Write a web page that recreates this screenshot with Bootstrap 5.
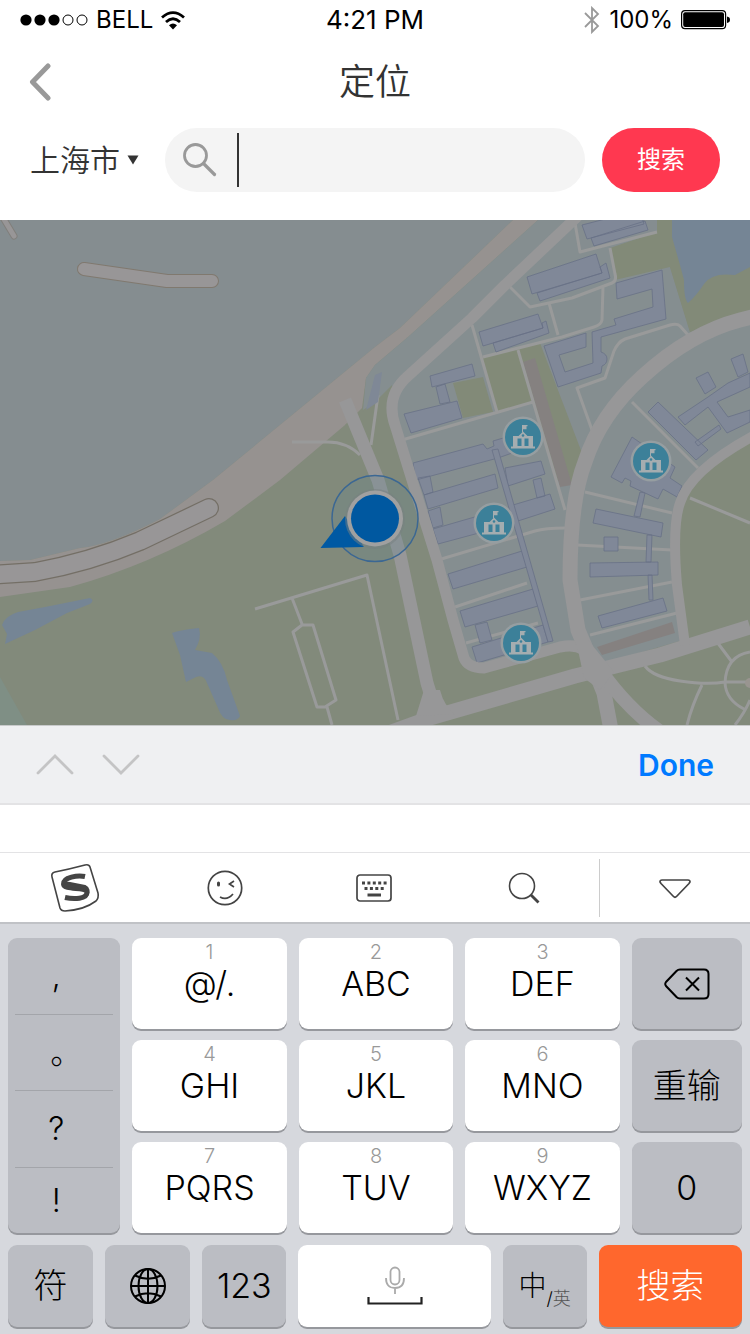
<!DOCTYPE html>
<html lang="zh-CN">
<head>
<meta charset="utf-8">
<meta name="viewport" content="width=device-width, initial-scale=1">
<title>定位</title>
<link rel="stylesheet" href="https://cdn.jsdelivr.net/npm/bootstrap@5.3.0/dist/css/bootstrap.min.css">
<style>
  body { font-family: Inter, "Noto Sans CJK SC", sans-serif; color: #333; background: #fff; }
  button { font-family: inherit; }
  .status { height: 40px; font-size: 24px; line-height: 40px; color: #000; font-weight: 400; }
  .status .clock { font-size: 26px; }
  .title-bar { height: 84px; }
  .title-bar h1 { font-size: 36px; line-height: 48px; font-weight: 350; }
  .search-row { gap: 17px; padding: 4px 30px 28px; }
  .city { width: 118px; }
  .city select { appearance: none; border: 0; background: none; padding: 0; width: 97px; font-size: 30px; line-height: 44px; font-weight: 350; color: #333; }
  .search-box { height: 64px; min-width: 0; background: #f4f4f4; padding: 0 24px 0 18px; }
  .search-box input { border: 0; background: none; outline: 0; font-size: 28px; width: 0; min-width: 0; }
  .caret-bar { width: 2px; height: 54px; background: #333; margin-left: 20px; }
  .search-btn { width: 118px; height: 64px; background: #ff3850; color: #fff; font-size: 24px; line-height: 36px; }
  .map { flex: 1 1 0; min-height: 300px; width: 100%; }
  .accessory { height: 80px; background: #eff0f2; border-top: 1px solid #c8cacb; border-bottom: 2px solid #e3e3e5; padding: 0 36px; }
  .accessory .step-btn { padding: 0; border: 0; background: none; line-height: 0; }
  .done { border: 0; background: none; padding: 0; color: #007aff; font-size: 30px; line-height: 44px; font-weight: 600; }
  .candidates { height: 47px; }
  .tools { height: 72px; border-top: 1px solid #e3e3e5; border-bottom: 2px solid #c0c2c6; }
  .tools button { flex: 1 1 0; border: 0; background: none; padding: 0; height: 58px; }
  .tools button:last-child { border-left: 1px solid #ccc; }
  .keyboard { background: #d6d8dd; padding: 14px 8px 7px; }
  .keys { display: grid; grid-template-columns: 112fr 154fr 154fr 154fr 110fr; grid-auto-rows: 91px; gap: 11px 12px; }
  .bottom-keys { display: grid; grid-template-columns: 85fr 85fr 84fr 192fr 84fr 143fr; grid-auto-rows: 82px; gap: 12px; margin-top: 12px; }
  .key { border: 0; border-radius: 9px; background: #fff; color: #000; box-shadow: 0 2px 0 #96989d; padding: 0; font-size: 34px; line-height: 44px; font-weight: 300; min-width: 0; }
  .key svg { display: block; margin: 0 auto; }
  .key.alt { background: #bbbdc3; }
  .key.go { background: #ff672d; color: #fff; }
  .key .num { font-size: 20px; line-height: 20px; color: #999; padding-top: 4px; }
  .key-letters { display: flex; flex-direction: column; align-items: center; }
  .punct { grid-row: span 3; display: grid; grid-template-rows: 76fr 76fr 77fr 66fr; padding: 0 7px; }
  .punct button { min-height: 0; border: 0; background: none; color: #000; font-size: 32px; font-weight: 300; line-height: 44px; padding: 0 16px 0 0; }
  .punct button + button { border-top: 1px solid #a3a5aa; }
  .punct .stop { padding: 0 0 0 4px; }
  .lang-main { font-size: 28px; }
  .lang-sub { font-size: 18px; color: #555; padding-top: 26px; }
</style>
</head>
<body class="d-flex flex-column min-vh-100">

<header class="bg-white">
  <div class="status row g-0 px-3">
    <div class="col d-flex align-items-center">
      <svg class="ms-1 me-2" width="68" height="12" viewBox="0 0 68 12" aria-hidden="true"><g fill="#000"><circle cx="6" cy="6" r="5.6"/><circle cx="20" cy="6" r="5.6"/><circle cx="34" cy="6" r="5.6"/></g><g fill="none" stroke="#000"><circle cx="48" cy="6" r="5"/><circle cx="62" cy="6" r="5"/></g></svg>
      <span>BELL</span>
      <svg class="ms-2" width="24" height="19" viewBox="0 0 24 19" aria-label="Wi-Fi"><g fill="none" stroke="#000" stroke-width="2.8"><path d="M1 6.500Q12-3.200 23 6.500"/><path d="M5 11Q12 4.600 19 11"/></g><path d="M8 14.200Q12 11 16 14.200L12 18.500z"/></svg>
    </div>
    <div class="clock col-auto">4:21 PM</div>
    <div class="col d-flex align-items-center justify-content-end">
      <svg class="me-2" width="18" height="28" viewBox="0 0 18 28" aria-label="Bluetooth"><path d="M2 7l13 13-6 6V2l6 6L2 21" fill="none" stroke="#999" stroke-width="1.8"/></svg>
      <span>100%</span>
      <svg class="ms-2 me-1" width="49" height="20" viewBox="0 0 49 20" aria-label="电池"><rect x=".6" y=".6" width="44" height="18" rx="3.4" fill="none" stroke="#000" stroke-width="1.2"/><rect x="2.2" y="2.2" width="40.8" height="14.8" rx="2" fill="#000"/><path d="M46 6.500q3 .6 3 3.300t-3 3.300z"/></svg>
    </div>
  </div>
  <nav class="title-bar row g-0 align-items-center px-4">
    <div class="col"><a href="#" class="d-inline-block ms-1" aria-label="返回"><svg width="24" height="38" viewBox="0 0 24 38"><path d="M20 3L4.500 19 20 35" fill="none" stroke="#999" stroke-width="5" stroke-linecap="round" stroke-linejoin="round"/></svg></a></div>
    <h1 class="col-auto m-0">定位</h1>
    <div class="col"></div>
  </nav>
  <form class="search-row d-flex align-items-center" onsubmit="return false">
    <div class="city d-flex align-items-center flex-shrink-0 pe-2">
      <select aria-label="城市"><option>上海市</option></select>
      <svg class="flex-shrink-0" width="12" height="10" viewBox="0 0 12 10" aria-hidden="true"><path d="M.5.500h11L6 9.500z" fill="#333"/></svg>
    </div>
    <div class="search-box rounded-pill d-flex align-items-center flex-grow-1">
      <svg class="flex-shrink-0" width="34" height="34" viewBox="0 0 34 34" aria-hidden="true"><g fill="none" stroke="#999" stroke-width="2.800" stroke-linecap="round"><circle cx="12.500" cy="12.500" r="11"/><path d="M20.500 20.500L31.500 31.500" stroke-width="3.200"/></g></svg>
      <span class="caret-bar flex-shrink-0"></span>
      <input class="flex-grow-1" type="text" aria-label="搜索地点">
    </div>
    <button class="search-btn btn rounded-pill border-0 p-0 flex-shrink-0" type="submit">搜索</button>
  </form>
</header>

<svg class="map d-block" viewBox="0 220 750 505" preserveAspectRatio="xMidYMid slice" role="img" aria-label="地图">
  <defs>
    <g id="pin">
      <circle r="20.500" fill="#969ea1"/><circle r="18" fill="#3c8099"/>
      <g fill="#a5adb0"><path d="M-12 9.500h24v2h-24zM-10-1h5.500L0-5.500 4.500-1H10V10H-10z"/><path d="M-1-12h5.500v1.200h-1v3h-3.500v3H-1z"/></g>
      <path d="M-5.500 1.500h4V9h-4zM1.500 1.500h4V9h-4z" fill="#3c8099"/><circle cy="-1.500" r="1.300" fill="#3c8099"/>
    </g>
  </defs>
  <rect y="220" width="750" height="505" fill="#828a7b"/>
  <!-- river and shore -->
  <path d="M0 220H513L400 328 375 347 213 480 160 519Q110 545 80 548L30 560 0 561z" fill="#858d90"/>
  <path d="M513 220H538L408 337 375 365 366 378 362 408 345 425 280 480 225 521Q150 565 70 587L0 597V561L30 560 80 548Q110 545 160 519L213 480 375 347 400 328z" fill="#969290"/>
  <!-- campus blocks -->
  <path d="M538 220H657V232L670 267 690 332 750 315V437L702 473 682 500 675 537 683 640 605 663 592 663 575 643 470 668 455 610 410 480 392 407 375 402 363 410 366 378 375 365 408 337z" fill="#858e90"/>
  <path d="M392 385L375 402 345 425V480H412L398 437z" fill="#828a7b"/>
  <path d="M575 220H657V232L580 252z" fill="#858d90"/>
  <g fill="#828a78">
    <path d="M657 220H750V312L690 332 670 267 615 280 610 248 657 232z"/>
    <path d="M482 357L518 348 532 402 497 412zM453 383L483 377 493 412 463 418zM518 348L540 343 582 453 574 485 557 480z"/>
  </g>
  <path d="M523 362L535 358 572 485 560 487z M597 647L672 622 675 633 602 655z" fill="#858180"/>
  <g fill="#758595">
    <path d="M672 220H750V267L735 275Q712 272 704 284T688 303Q684 300 684 280L680 265 672 237z"/>
    <path d="M2 625Q5 616 18 612L45 607 90 598Q95 600 90 604L67 613 35 630 5 644 7 634z"/>
    <path d="M172 633Q180 630 199 628 202 638 195 650L212 653Q223 662 227 680L240 716Q238 721 230 720 222 720 218 708L207 683Q204 674 196 677L186 682 180 655z"/>
  </g>
  <path d="M0 677L27 725H0z" fill="#7f8f85"/>
  <!-- minor paths -->
  <g fill="none" stroke="#999a9a" stroke-width="3" stroke-linejoin="round">
    <path d="M508 285L530 307 572 298 612 283Q617 281 615 274L610 248M575 223L580 252 657 232M549 303L558 335M603 287L602 320Q601 325 594 327L562 337 483 357M472 325L497 412M402 440L533 402M518 350L565 510M688 335L680 326Q677 323 670 325L625 339Q618 342 614 351L605 378 577 388 592 430M632 402L698 468"/>
    <path d="M438 560L535 531Q545 528 565 528M455 607L527 583M466 643L538 623M585 492L672 513M577 545L672 550M580 600L672 582M590 635L677 613M690 498L750 523"/>
    <path d="M255 609L367 575 398 720M292 598L302 624M302 625H313L336 700 325 707H317L293 632zM327 707L332 725"/>
    <path d="M645 666Q653 677 680 681T725 682H750M717 642L732 662M750 652Q726 656 725 683 726 700 744 709M702 685Q692 705 687 725M750 700Q745 712 735 725"/>
    <path d="M292 442H325Q346 441 360 455M378 395L371 445"/>
  </g>
  <path d="M375 375L366 410 378 402 382 372z" fill="#7f8896"/>
  <!-- buildings -->
  <g fill="#808898" stroke="#687186" stroke-width=".8" stroke-linejoin="round">
    <path d="M591 238L645 221 648 230 594 246zM582 225L640 210 644 224 587 239z"/>
    <path d="M537 293L602 273 600 267 606 263 610 278 540 301zM527 277L596 254 602 273 532 294z"/>
    <path d="M493 343L543 328 542 323 546 321 549 333 496 352zM479 332L538 314 543 328 483 346z"/>
    <path d="M436 387L445 384 450 402 440 404zM430 376L472 364 475 376 432 387zM404 414L457 401 462 418 411 433z"/>
    <path d="M616 283L662 270 666 319 601 337V352Q607 354 607 359T602 366L601 373 558 387 544 346 586 333V347L559 355 565 372 593 363 592 332 616 325 614 319 653 307 652 289 617 299z"/>
    <path d="M678 417L708 397 728 383 750 373V387L717 402 728 417 750 410V422L727 433 708 407 685 425zM696 378L708 372 716 387 705 394zM731 359L743 354 748 372 738 377zM695 442L719 425 721 429 698 446zM648 412L658 402 708 450 696 460z"/>
    <path d="M632 437L611 477 622 483 625 478 631 481 630 486 658 499 663 489 677 497 682 486 670 478 675 467z"/>
    <path d="M418 478L430 476 433 492 424 495zM428 511L440 507 443 525 433 528zM413 463L483 444 487 449 494 446 493 441 510 436 515 452 498 458 416 480zM424 495L495 474 498 488 428 509zM433 529L485 514 490 530 438 544z"/>
    <path d="M533 480L541 478 545 496 537 498zM505 468L541 461 545 474 508 486zM513 505L550 494 555 509 518 521z"/>
    <path d="M475 625L487 622 492 640 480 643zM448 574L522 551 527 567 453 589zM460 611L533 589 538 606 465 627zM472 647L543 625 548 642 477 663z"/>
    <path d="M492 450L498 449 553 641 548 642z"/>
    <path d="M640 492L645 493 640 517 634 516zM647 535H652L651 562H646zM648 575H652L653 600H649zM596 509L663 523 661 537 593 523zM604 537H618V551H604zM590 563L658 562V575L590 577zM598 616L663 598 667 611 602 628z"/>
  </g>
  <!-- roads -->
  <g fill="none" stroke="#979798" stroke-linejoin="round">
    <path d="M580 214L505 285 472 318 408 376Q385 396 395 425L412 480 437 560 453 620 464 658Q468 668 484 668L560 647Q585 642 592 660" stroke-width="11"/>
    <path d="M345 400L378 480 400 555 427 683 437 715" stroke-width="13"/>
    <path d="M375 738L430 718 575 676 660 655 750 627" stroke-width="15"/>
    <path d="M760 315L740 320Q690 333 642 377 600 415 585 462 570 500 570 580L578 630 592 663 604 693 611 730" stroke-width="15"/>
    <path d="M755 435Q690 470 680 503 672 525 677 585L685 645" stroke-width="10"/>
    <path d="M600 670Q630 712 665 735" stroke-width="14"/>
  </g>
  <path d="M588 640L606 662 614 672 600 690 584 678 578 650zM424 690L416 716 455 714Q444 706 440 690z" fill="#979798"/>
  <circle cx="750" cy="683" r="5" fill="#999590"/>
  <!-- piers -->
  <g fill="none" stroke-linejoin="round" stroke-linecap="round">
    <path d="M84 269L167 281H212" stroke="#80796f" stroke-width="14"/>
    <path d="M84 269L167 281H212" stroke="#989697" stroke-width="12"/>
    <path d="M2 216L14 236" stroke="#807f7b" stroke-width="7"/><path d="M2 216L14 236" stroke="#989697" stroke-width="5"/>
    <path d="M-10 575L35 572Q90 562 140 541L209 508" stroke="#746f66" stroke-width="20"/>
    <path d="M-10 575L35 572Q90 562 140 541L209 508" stroke="#989697" stroke-width="17.500"/>
  </g>
  <!-- current position -->
  <circle cx="375" cy="518.500" r="43" fill="#5d8290" fill-opacity=".22" stroke="#3b6793" stroke-width="1.500"/>
  <path d="M320.500 548L345 516 364 547z" fill="#0059a3"/>
  <circle cx="375" cy="519" r="30" fill="#777f80" fill-opacity=".5"/><circle cx="375" cy="518.500" r="28" fill="#a0a0a0"/><circle cx="375" cy="518.500" r="24" fill="#0058a0"/>
  <use href="#pin" x="523" y="437"/><use href="#pin" x="494" y="523"/><use href="#pin" x="521" y="643"/><use href="#pin" x="651" y="461"/>
</svg>

<section class="accessory d-flex align-items-center">
  <button class="step-btn" type="button" aria-label="上一项"><svg width="38" height="24" viewBox="0 0 38 24"><path d="M2 20L19 3 36 20" fill="none" stroke="#c4c4c5" stroke-width="2.800" stroke-linecap="round"/></svg></button>
  <button class="step-btn ms-4 ps-1" type="button" aria-label="下一项"><svg width="38" height="24" viewBox="0 0 38 24"><path d="M2 3L19 20 36 3" fill="none" stroke="#c4c4c5" stroke-width="2.800" stroke-linecap="round"/></svg></button>
  <button class="done ms-auto" type="button">Done</button>
</section>
<div class="candidates bg-white"></div>
<div class="tools d-flex align-items-center bg-white">
  <button type="button" aria-label="输入法"><svg width="50" height="50" viewBox="0 0 50 50"><path d="M5 9Q20 6 35 2 39 1 40 4L48 30Q49 35 46 38 34 47 15 48 11 48 10 45L2 14Q1 10 5 9z" fill="none" stroke="#444" stroke-width="1.600"/><path d="M35 13.500C28 12 13 14 13.500 21S37 23 37 29.500 24 36.500 15 34.500" fill="none" stroke="#444" stroke-width="5"/><path d="M14 18Q12 24 20 25L33 27Q38 29 37 33 41 26 35 23L20 20Q15 20 14 18z" fill="#444" stroke="#444" stroke-width="2"/></svg></button>
  <button type="button" aria-label="表情"><svg width="38" height="38" viewBox="0 0 38 38"><g fill="none" stroke="#444" stroke-width="1.700"><circle cx="19" cy="19" r="16.700"/><path d="M28 12L23.500 15 28 18M14 28Q21 32 27 25"/></g><rect x="11" y="12.500" width="3" height="5" rx="1.500" fill="#444"/></svg></button>
  <button type="button" aria-label="键盘"><svg width="36" height="28" viewBox="0 0 36 28"><rect x="1" y="1" width="34" height="26" rx="3" fill="none" stroke="#444" stroke-width="1.700"/><path d="M6 9H31" stroke="#444" stroke-width="3" stroke-dasharray="3 2.400"/><path d="M8.500 14.500H29" stroke="#444" stroke-width="3" stroke-dasharray="3 2.400"/><path d="M11.500 21H25" stroke="#444" stroke-width="3"/></svg></button>
  <button type="button" aria-label="搜索"><svg width="32" height="32" viewBox="0 0 32 32"><g fill="none" stroke="#444" stroke-width="1.600"><circle cx="14" cy="14" r="12.500"/><path d="M23 23L30.500 30.500" stroke-width="2.800"/></g></svg></button>
  <button type="button" aria-label="收起键盘"><svg width="34" height="22" viewBox="0 0 34 22"><path d="M4 2H30Q33.500 2.500 31 5.500L18.500 18.500Q17 20 15.500 18.500L3 5.500Q.5 2.500 4 2z" fill="none" stroke="#444" stroke-width="1.700"/></svg></button>
</div>

<main class="keyboard">
  <div class="keys">
    <div class="punct key alt">
      <button type="button">,</button><button class="stop" type="button">。</button><button type="button">?</button><button type="button">!</button>
    </div>
    <button class="key key-letters" type="button"><span class="num">1</span><span>@/.</span></button>
    <button class="key key-letters" type="button"><span class="num">2</span><span>ABC</span></button>
    <button class="key key-letters" type="button"><span class="num">3</span><span>DEF</span></button>
    <button class="key alt" type="button" aria-label="删除"><svg width="46" height="32" viewBox="0 0 46 32"><g fill="none" stroke="#000" stroke-width="2"><path d="M16 1.500H40Q44.500 1.500 44.500 6V26Q44.500 30.500 40 30.500H16Q14 30.500 12.500 29L2 18Q.5 16 2 14L12.500 3Q14 1.500 16 1.500z"/><path d="M22 9.500L35 22.500M35 9.500L22 22.500"/></g></svg></button>
    <button class="key key-letters" type="button"><span class="num">4</span><span>GHI</span></button>
    <button class="key key-letters" type="button"><span class="num">5</span><span>JKL</span></button>
    <button class="key key-letters" type="button"><span class="num">6</span><span>MNO</span></button>
    <button class="key alt" type="button">重输</button>
    <button class="key key-letters" type="button"><span class="num">7</span><span>PQRS</span></button>
    <button class="key key-letters" type="button"><span class="num">8</span><span>TUV</span></button>
    <button class="key key-letters" type="button"><span class="num">9</span><span>WXYZ</span></button>
    <button class="key alt" type="button">0</button>
  </div>
  <div class="bottom-keys">
    <button class="key alt" type="button">符</button>
    <button class="key alt" type="button" aria-label="切换语言"><svg width="38" height="38" viewBox="0 0 38 38"><g fill="none" stroke="#000" stroke-width="2"><circle cx="19" cy="19" r="17"/><ellipse cx="19" cy="19" rx="9.500" ry="17"/><path d="M19 2V36M2 19H36M6 8.500Q19 15 32 8.500M6 29.500Q19 23 32 29.500"/></g></svg></button>
    <button class="key alt" type="button">123</button>
    <button class="key" type="button" aria-label="空格"><svg width="56" height="40" viewBox="0 0 56 40"><g fill="none" stroke="#aaa" stroke-width="1.800"><rect x="23.500" y="1.500" width="9" height="17" rx="4.500"/><path d="M19 12Q19 22 28 22T37 12M28 22V28"/></g><path d="M1.500 31V37.500H54.500V31" fill="none" stroke="#222" stroke-width="2.200"/></svg></button>
    <button class="key alt d-flex align-items-center justify-content-center" type="button"><span class="lang-main">中</span><span class="lang-sub"><span class="text-black">/</span>英</span></button>
    <button class="key go" type="button">搜索</button>
  </div>
</main>

<script src="https://cdn.jsdelivr.net/npm/bootstrap@5.3.0/dist/js/bootstrap.bundle.min.js"></script>
</body>
</html>
